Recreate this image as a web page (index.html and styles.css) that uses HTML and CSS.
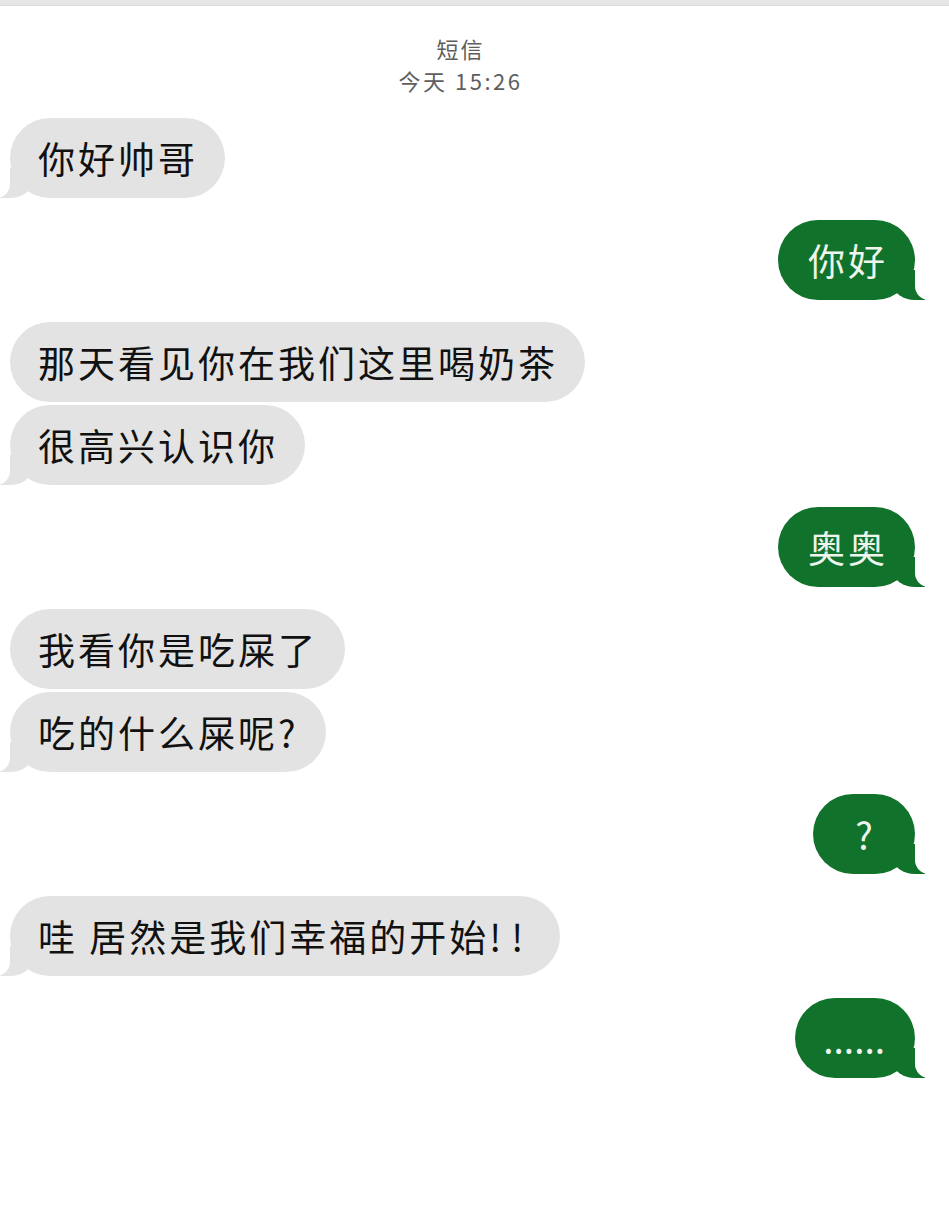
FILE: index.html
```html
<!DOCTYPE html>
<html lang="zh">
<head>
<meta charset="utf-8">
<title>短信</title>
<link rel="stylesheet" href="styles.css">
</head>
<body>
<div class="topbar"></div>
<header class="head">
  <div class="head-title">短信</div>
  <div class="head-time">今天 15:26</div>
</header>
<main class="thread">
  <div class="bubble in tail">你好帅哥</div>
  <div class="bubble out tail">你好</div>
  <div class="bubble in">那天看见你在我们这里喝奶茶</div>
  <div class="bubble in tail grouped">很高兴认识你</div>
  <div class="bubble out tail">奥奥</div>
  <div class="bubble in">我看你是吃屎了</div>
  <div class="bubble in tail grouped">吃的什么屎呢?</div>
  <div class="bubble out tail">?</div>
  <div class="bubble in tail">哇 居然是我们幸福的开始<span class="bang">!!</span></div>
  <div class="bubble out tail dots">......</div>
</main>
</body>
</html>
```
FILE: styles.css
```css
html, body {
  margin: 0;
  padding: 0;
  background: #ffffff;
}
body {
  width: 949px;
  min-height: 1221px;
  overflow: hidden;
  font-family: "Noto Sans CJK SC", "Noto Sans", sans-serif;
}
.topbar {
  height: 5px;
  background: #e6e6e6;
  border-bottom: 1px solid #d8d8d8;
}
.head {
  padding-top: 26px;
  padding-right: 28px;
  text-align: center;
  color: #5e5e5e;
  font-size: 22px;
  line-height: 32px;
}
.head-title {
  letter-spacing: 2px;
}
.head-time {
  letter-spacing: 2.5px;
}
.thread {
  display: flex;
  flex-direction: column;
  padding: 0 34px 0 10px;
  margin-top: 22px;
}
.bubble {
  position: relative;
  font-size: 37px;
  letter-spacing: 3px;
  line-height: 44px;
  height: 44px;
  padding: 18px 27px 18px 28px;
  border-radius: 40px;
  white-space: nowrap;
  margin-top: 22px;
}
.bubble:first-child {
  margin-top: 0;
}
.bubble.grouped {
  margin-top: 3px;
}
.bang {
  letter-spacing: 10px;
}
.in {
  align-self: flex-start;
  background: #e3e3e3;
  color: #111111;
}
.out {
  align-self: flex-end;
  background: #11722b;
  color: #eef5ee;
  min-width: 45px;
  text-align: center;
  padding-left: 30px;
}
.dots {
  letter-spacing: 0;
  padding-left: 28px;
  padding-right: 30px;
}
.tail::before,
.tail::after {
  content: "";
  position: absolute;
  bottom: 0;
  height: 30px;
}
.in.tail::before {
  left: -10px;
  width: 32px;
  background: #e3e3e3;
  border-bottom-right-radius: 22px 16px;
}
.in.tail::after {
  left: -40px;
  width: 40px;
  background: #ffffff;
  border-bottom-right-radius: 14px;
}
.out.tail::before {
  right: -10px;
  width: 32px;
  background: #11722b;
  border-bottom-left-radius: 22px 16px;
}
.out.tail::after {
  right: -40px;
  width: 40px;
  background: #ffffff;
  border-bottom-left-radius: 14px;
}
```
